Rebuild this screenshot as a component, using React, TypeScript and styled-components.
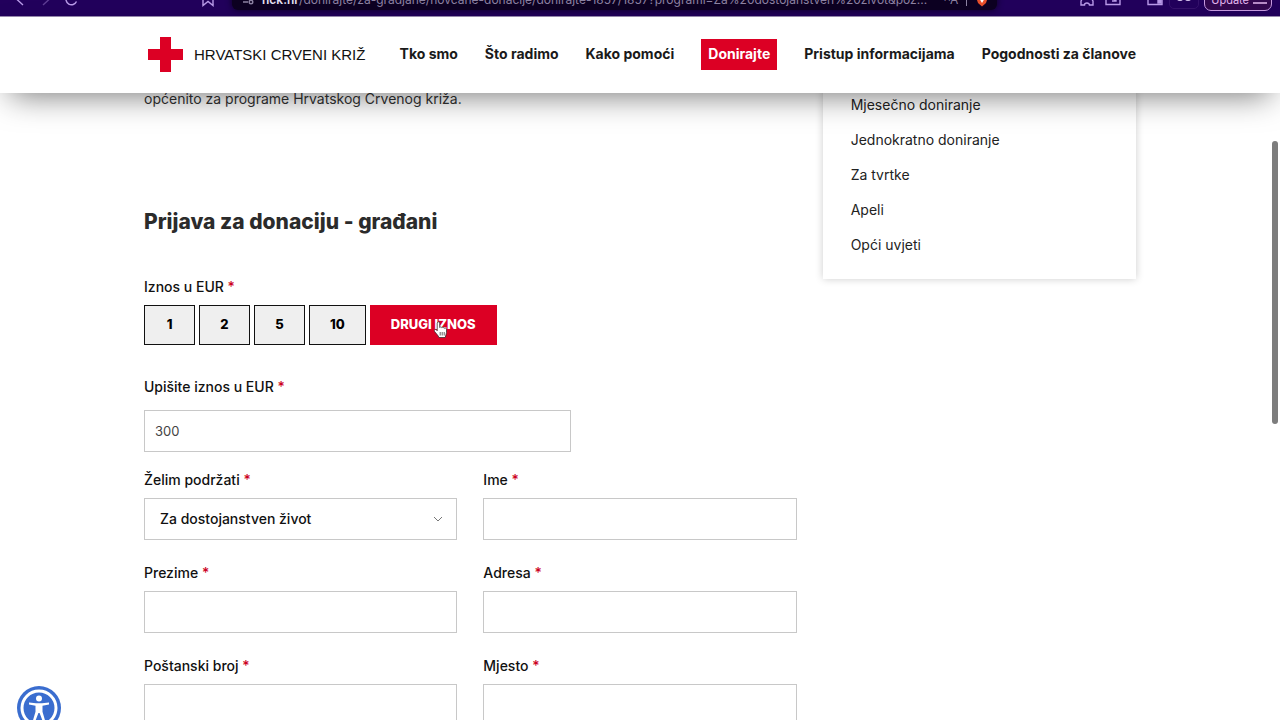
import React from "react";
import styled, { createGlobalStyle } from "styled-components";

const sans = `Inter, "Open Sans", "Liberation Sans", sans-serif`;
const red = "#dc0024";

const GlobalStyle = createGlobalStyle`
  * { box-sizing: border-box; }
  body {
    margin: 0;
    background: #fff;
    color: #111;
    font-family: ${sans};
    font-size: 14px;
    line-height: 24px;
  }
  button, input, select { font-family: inherit; }
`;

const Screen = styled.div`
  position: relative;
  display: flex;
  flex-direction: column;
  height: 100vh;
  overflow: hidden;
`;

const BrowserBar = styled.div`
  flex: none;
  display: flex;
  align-items: flex-end;
  height: 17px;
  overflow: hidden;
  border-bottom: 1px solid #9a8bb0;
  background: #22005c;
  color: #b99be8;
`;

const Toolbar = styled.div`
  flex: 1;
  min-width: 0;
  display: flex;
  align-items: center;
  height: 32px;
  padding: 0 8px 0 12px;
`;

const ToolButton = styled.button<{ $gap?: number; $dim?: boolean }>`
  flex: none;
  display: flex;
  padding: 0;
  border: 0;
  background: none;
  color: inherit;
  margin-right: ${(p) => p.$gap ?? 10}px;
  opacity: ${(p) => (p.$dim ? 0.4 : 1)};
`;

const PrivateButton = styled(ToolButton)`
  justify-content: center;
  width: 30px;
  height: 18px;
  align-items: center;
  border: 1px solid #35126c;
  border-radius: 5px;
`;

const AddressBar = styled.div`
  flex: 1;
  min-width: 0;
  display: flex;
  align-items: center;
  gap: 8px;
  height: 20px;
  padding: 0 8px 0 10px;
  border-radius: 6px;
  background: #0d0122;
  box-shadow: 0 0 6px #0d0122;
  color: #8d83a3;
  font-size: 12px;
  line-height: 16px;
  margin-right: 82px;
`;

const Url = styled.span`
  flex: 1;
  min-width: 0;
  overflow: hidden;
  white-space: nowrap;
  b { color: #e6e0f2; font-weight: 600; }
`;

const Divider = styled.span`
  width: 1px;
  height: 12px;
  background: #8d83a3;
`;

const UpdateButton = styled.button`
  flex: none;
  display: flex;
  align-items: center;
  gap: 4px;
  height: 22px;
  padding: 0 4px 0 6px;
  border: 1px solid #c79be0;
  border-radius: 7px;
  background: #33084f;
  color: #e3b8f0;
  font-size: 11px;
`;

const SiteHeader = styled.header`
  position: relative;
  z-index: 2;
  flex: none;
  background: #fff;
  box-shadow: 0 12px 32px -10px rgba(0, 0, 0, 0.55);
`;

const Container = styled.div`
  width: 100%;
  max-width: 992px;
  margin: 0 auto;
`;

const HeaderRow = styled(Container)`
  display: flex;
  align-items: center;
  justify-content: space-between;
  gap: 29px;
  height: 76px;
  padding-bottom: 1px;
`;

const Logo = styled.a`
  display: flex;
  align-items: center;
  gap: 11px;
  padding-left: 4px;
  color: #111;
  font-family: "Liberation Sans", Arial, sans-serif;
  font-size: 15px;
  text-decoration: none;
  white-space: nowrap;
`;

const Nav = styled.nav`
  display: flex;
  align-items: center;
  gap: 27px;
`;

const NavLink = styled.a<{ $active?: boolean }>`
  padding: ${(p) => (p.$active ? "0 7px 1px" : "0 0 1px")};
  line-height: 30px;
  background: ${(p) => (p.$active ? red : "transparent")};
  color: ${(p) => (p.$active ? "#fff" : "#1a1a1a")};
  font-weight: 700;
  text-decoration: none;
  white-space: nowrap;
`;

const Body = styled(Container)`
  display: grid;
  grid-template-columns: repeat(3, minmax(0, 1fr));
  column-gap: 26px;
  align-items: start;
  margin-top: -6px;
`;

const Columns = styled.main`
  grid-column: span 2;
`;

const Intro = styled.p`
  margin: 0;
  color: #333;
`;

const Title = styled.h2`
  margin: 95px 0 37px;
  color: #2b2b2b;
  font-size: 21px;
  font-weight: 800;
  line-height: 32px;
`;

const Label = styled.label`
  display: block;
  font-weight: 500;
`;

const Star = styled.span`
  color: #cc0022;
`;

const AmountGroup = styled.fieldset`
  margin: 0 0 30px;
  padding: 0;
  border: 0;
`;

const Legend = styled.legend`
  padding: 0;
  font-weight: 500;
`;

const Amounts = styled.div`
  display: flex;
  gap: 4px;
  margin-top: 6px;
`;

const AmountButton = styled.button<{ $active?: boolean }>`
  position: relative;
  min-width: 51px;
  height: 40px;
  padding: 0 20px 2px;
  border: 1px solid ${(p) => (p.$active ? red : "#111")};
  background: ${(p) => (p.$active ? red : "#efefef")};
  color: ${(p) => (p.$active ? "#fff" : "#000")};
  font-size: 13px;
  font-weight: 800;
`;

const Pointer = styled.svg`
  position: absolute;
  left: 63px;
  top: 15px;
`;

const AmountField = styled.div`
  display: grid;
  gap: 11px;
  max-width: 427px;
  margin-bottom: 16px;
`;

const Fields = styled.div`
  display: grid;
  grid-template-columns: 1fr 1fr;
  gap: 21px 26px;
`;

const Field = styled.div`
  display: grid;
  gap: 6px;
`;

const TextInput = styled.input`
  width: 100%;
  height: 42px;
  padding: 0 10px;
  border: 1px solid #c8c8c8;
  border-radius: 0;
  background: #fff;
  color: #444;
  font-size: 13px;
`;

const SelectBox = styled.div`
  position: relative;
`;

const Select = styled.select`
  appearance: none;
  width: 100%;
  height: 42px;
  padding: 0 32px 2px 15px;
  border: 1px solid #c8c8c8;
  border-radius: 0;
  background: #fff;
  color: #111;
  font-size: 14px;
  font-weight: 500;
`;

const Chevron = styled.svg`
  position: absolute;
  right: 14px;
  top: 18px;
  pointer-events: none;
`;

const SideMenu = styled.aside`
  padding: 0 28px 17px;
  background: #fff;
  box-shadow: 0 0 8px rgba(0, 0, 0, 0.2);
`;

const SideList = styled.ul`
  margin: 0;
  padding: 0;
  list-style: none;
`;

const SideLink = styled.a`
  display: block;
  color: #222;
  line-height: 35px;
  text-decoration: none;
`;

const ScrollThumb = styled.div`
  position: absolute;
  z-index: 3;
  right: 2px;
  top: 141px;
  width: 6px;
  height: 283px;
  border-radius: 3px;
  background: #7d7d7d;
`;

const AccessButton = styled.button`
  position: absolute;
  z-index: 3;
  left: 17px;
  bottom: -10px;
  padding: 0;
  border: 0;
  background: none;
  line-height: 0;
`;

const navItems = ["Tko smo", "Što radimo", "Kako pomoći", "Donirajte", "Pristup informacijama", "Pogodnosti za članove"];
const sideItems = ["Mjesečno doniranje", "Jednokratno doniranje", "Za tvrtke", "Apeli", "Opći uvjeti"];
const amounts = ["1", "2", "5", "10", "DRUGI IZNOS"];
const fields = [
  { id: "ime", label: "Ime" },
  { id: "prezime", label: "Prezime" },
  { id: "adresa", label: "Adresa" },
  { id: "posta", label: "Poštanski broj" },
  { id: "mjesto", label: "Mjesto" },
];

const stroke = { fill: "none", stroke: "currentColor", strokeWidth: 1.4 };

function BrowserChrome() {
  return (
    <BrowserBar>
      <Toolbar>
        <ToolButton aria-label="Back">
          <svg width="16" height="16" {...stroke}><path d="M11 2L5 7.500l6 5.500" /></svg>
        </ToolButton>
        <ToolButton aria-label="Forward" $dim>
          <svg width="16" height="16" {...stroke}><path d="M5 2l6 5.500-6 5.500" /></svg>
        </ToolButton>
        <ToolButton aria-label="Reload" $gap={120}>
          <svg width="16" height="16" {...stroke}><path d="M12.500 9.500A5.500 5.500 0 1 1 11 3" /></svg>
        </ToolButton>
        <ToolButton aria-label="Bookmark" $gap={16}>
          <svg width="16" height="16" {...stroke}><path d="M3 2h10v11.500l-5-4-5 4z" /></svg>
        </ToolButton>
        <AddressBar>
          <svg width="12" height="12" {...stroke}><circle cx="3" cy="3" r="1.800" /><path d="M6 3h5M1 8h5" /><circle cx="9" cy="8" r="1.800" /></svg>
          <Url><b>hck.hr</b>/donirajte/za-gradjane/novcane-donacije/donirajte-1857/1857?programi=Za%20dostojanstven%20život&amp;poz...</Url>
          <span>ᴬA</span>
          <Divider />
          <svg width="14" height="14"><path d="M3 1h8l2 3-2 6-4 3.500L3 10 1 4z" fill="#e8502c" /><path d="M4 5l3 5 3-5z" fill="#fff" /></svg>
        </AddressBar>
        <ToolButton aria-label="Extensions">
          <svg width="16" height="16" {...stroke}><path d="M2 3h4a2 2 0 0 1 4 0h4v3a2 2 0 0 0 0 3v4h-3.500a2.500 2 0 0 0-5 0H2V9a2 2 0 0 0 0-3z" /></svg>
        </ToolButton>
        <ToolButton aria-label="Capture" $gap={26}>
          <svg width="16" height="16" {...stroke}><path d="M1 2h14v10.500H1z" /><path d="M6 5l5 4M11 6v3H7" /></svg>
        </ToolButton>
        <ToolButton aria-label="Sidebar" $gap={6}>
          <svg width="16" height="16" {...stroke}><path d="M1 2h14v10.500H1z" /><path d="M11 3h3v8h-3z" fill="currentColor" /></svg>
        </ToolButton>
        <PrivateButton aria-label="Private window" $gap={5}>
          <svg width="16" height="8" fill="#d9c8f0"><ellipse cx="4" cy="3" rx="3" ry="2" /><ellipse cx="12" cy="3" rx="3" ry="2" /></svg>
        </PrivateButton>
        <UpdateButton>Update <svg width="14" height="10" {...stroke}><path d="M0 1h14M0 8h14" /></svg></UpdateButton>
      </Toolbar>
    </BrowserBar>
  );
}

function HandPointer() {
  return (
    <Pointer width="14" height="18" viewBox="0 0 14 18" aria-hidden="true">
      <path
        d="M3.200 2.200c0-1.800 2.500-1.800 2.500 0v4.300c.3-.9 2-.8 2.200.3.500-.8 2.100-.5 2.200.5.700-.6 2.400-.3 2.400.9v3.300c0 1.900-1 2.900-1.300 5H4.900c-.4-1.900-2.900-4-4.300-6-1-1.600.6-2.700 1.700-1.700l.9.900z"
        fill="#fff"
        stroke="#222"
        strokeWidth="0.700"
        strokeLinejoin="round"
      />
      <path d="M6.200 11v3.500M8.200 11v3.500M10.200 11v3.500" stroke="#222" strokeWidth="0.700" />
    </Pointer>
  );
}

export default function App() {
  return (
    <Screen>
      <GlobalStyle />
      <BrowserChrome />
      <SiteHeader>
        <HeaderRow>
          <Logo href="#">
            <svg width="35" height="35" viewBox="0 0 35 35" aria-hidden="true"><path d="M12 0h11v12h12v11H23v12H12V23H0V12h12z" fill={red} /></svg>
            HRVATSKI CRVENI KRIŽ
          </Logo>
          <Nav>
            {navItems.map((t) => <NavLink key={t} href="#" $active={t === "Donirajte"}>{t}</NavLink>)}
          </Nav>
        </HeaderRow>
      </SiteHeader>
      <Body>
        <Columns>
          <Intro>općenito za programe Hrvatskog Crvenog križa.</Intro>
          <Title>Prijava za donaciju - građani</Title>
          <form>
            <AmountGroup>
              <Legend>Iznos u EUR <Star>*</Star></Legend>
              <Amounts>
                {amounts.map((a) => (
                  <AmountButton key={a} type="button" $active={a === "DRUGI IZNOS"}>
                    {a}
                    {a === "DRUGI IZNOS" && <HandPointer />}
                  </AmountButton>
                ))}
              </Amounts>
            </AmountGroup>
            <AmountField>
              <Label htmlFor="iznos">Upišite iznos u EUR <Star>*</Star></Label>
              <TextInput id="iznos" defaultValue="300" />
            </AmountField>
            <Fields>
              <Field>
                <Label htmlFor="program">Želim podržati <Star>*</Star></Label>
                <SelectBox>
                  <Select id="program"><option>Za dostojanstven život</option></Select>
                  <Chevron width="10" height="6" fill="none" stroke="#777"><path d="M1 1l4 4 4-4" /></Chevron>
                </SelectBox>
              </Field>
              {fields.map((f) => (
                <Field key={f.id}>
                  <Label htmlFor={f.id}>{f.label} <Star>*</Star></Label>
                  <TextInput id={f.id} />
                </Field>
              ))}
            </Fields>
          </form>
        </Columns>
        <SideMenu>
          <SideList>
            {sideItems.map((t) => <li key={t}><SideLink href="#">{t}</SideLink></li>)}
          </SideList>
        </SideMenu>
      </Body>
      <ScrollThumb />
      <AccessButton aria-label="Pristupačnost">
        <svg width="44" height="44" viewBox="0 0 44 44">
          <circle cx="22" cy="22" r="22" fill="#3a6dcf" />
          <circle cx="22" cy="22" r="17" fill="none" stroke="#fff" strokeWidth="3" />
          <circle cx="22" cy="12.500" r="3" fill="#fff" />
          <path d="M12 16.500l7 .8h6l7-.8v2l-6.500 1.300v6l3 10.200-2.200.8L22.600 27h-1.200l-3.700 9.800-2.200-.8 3-10.200v-6L12 18.500z" fill="#fff" />
        </svg>
      </AccessButton>
    </Screen>
  );
}
